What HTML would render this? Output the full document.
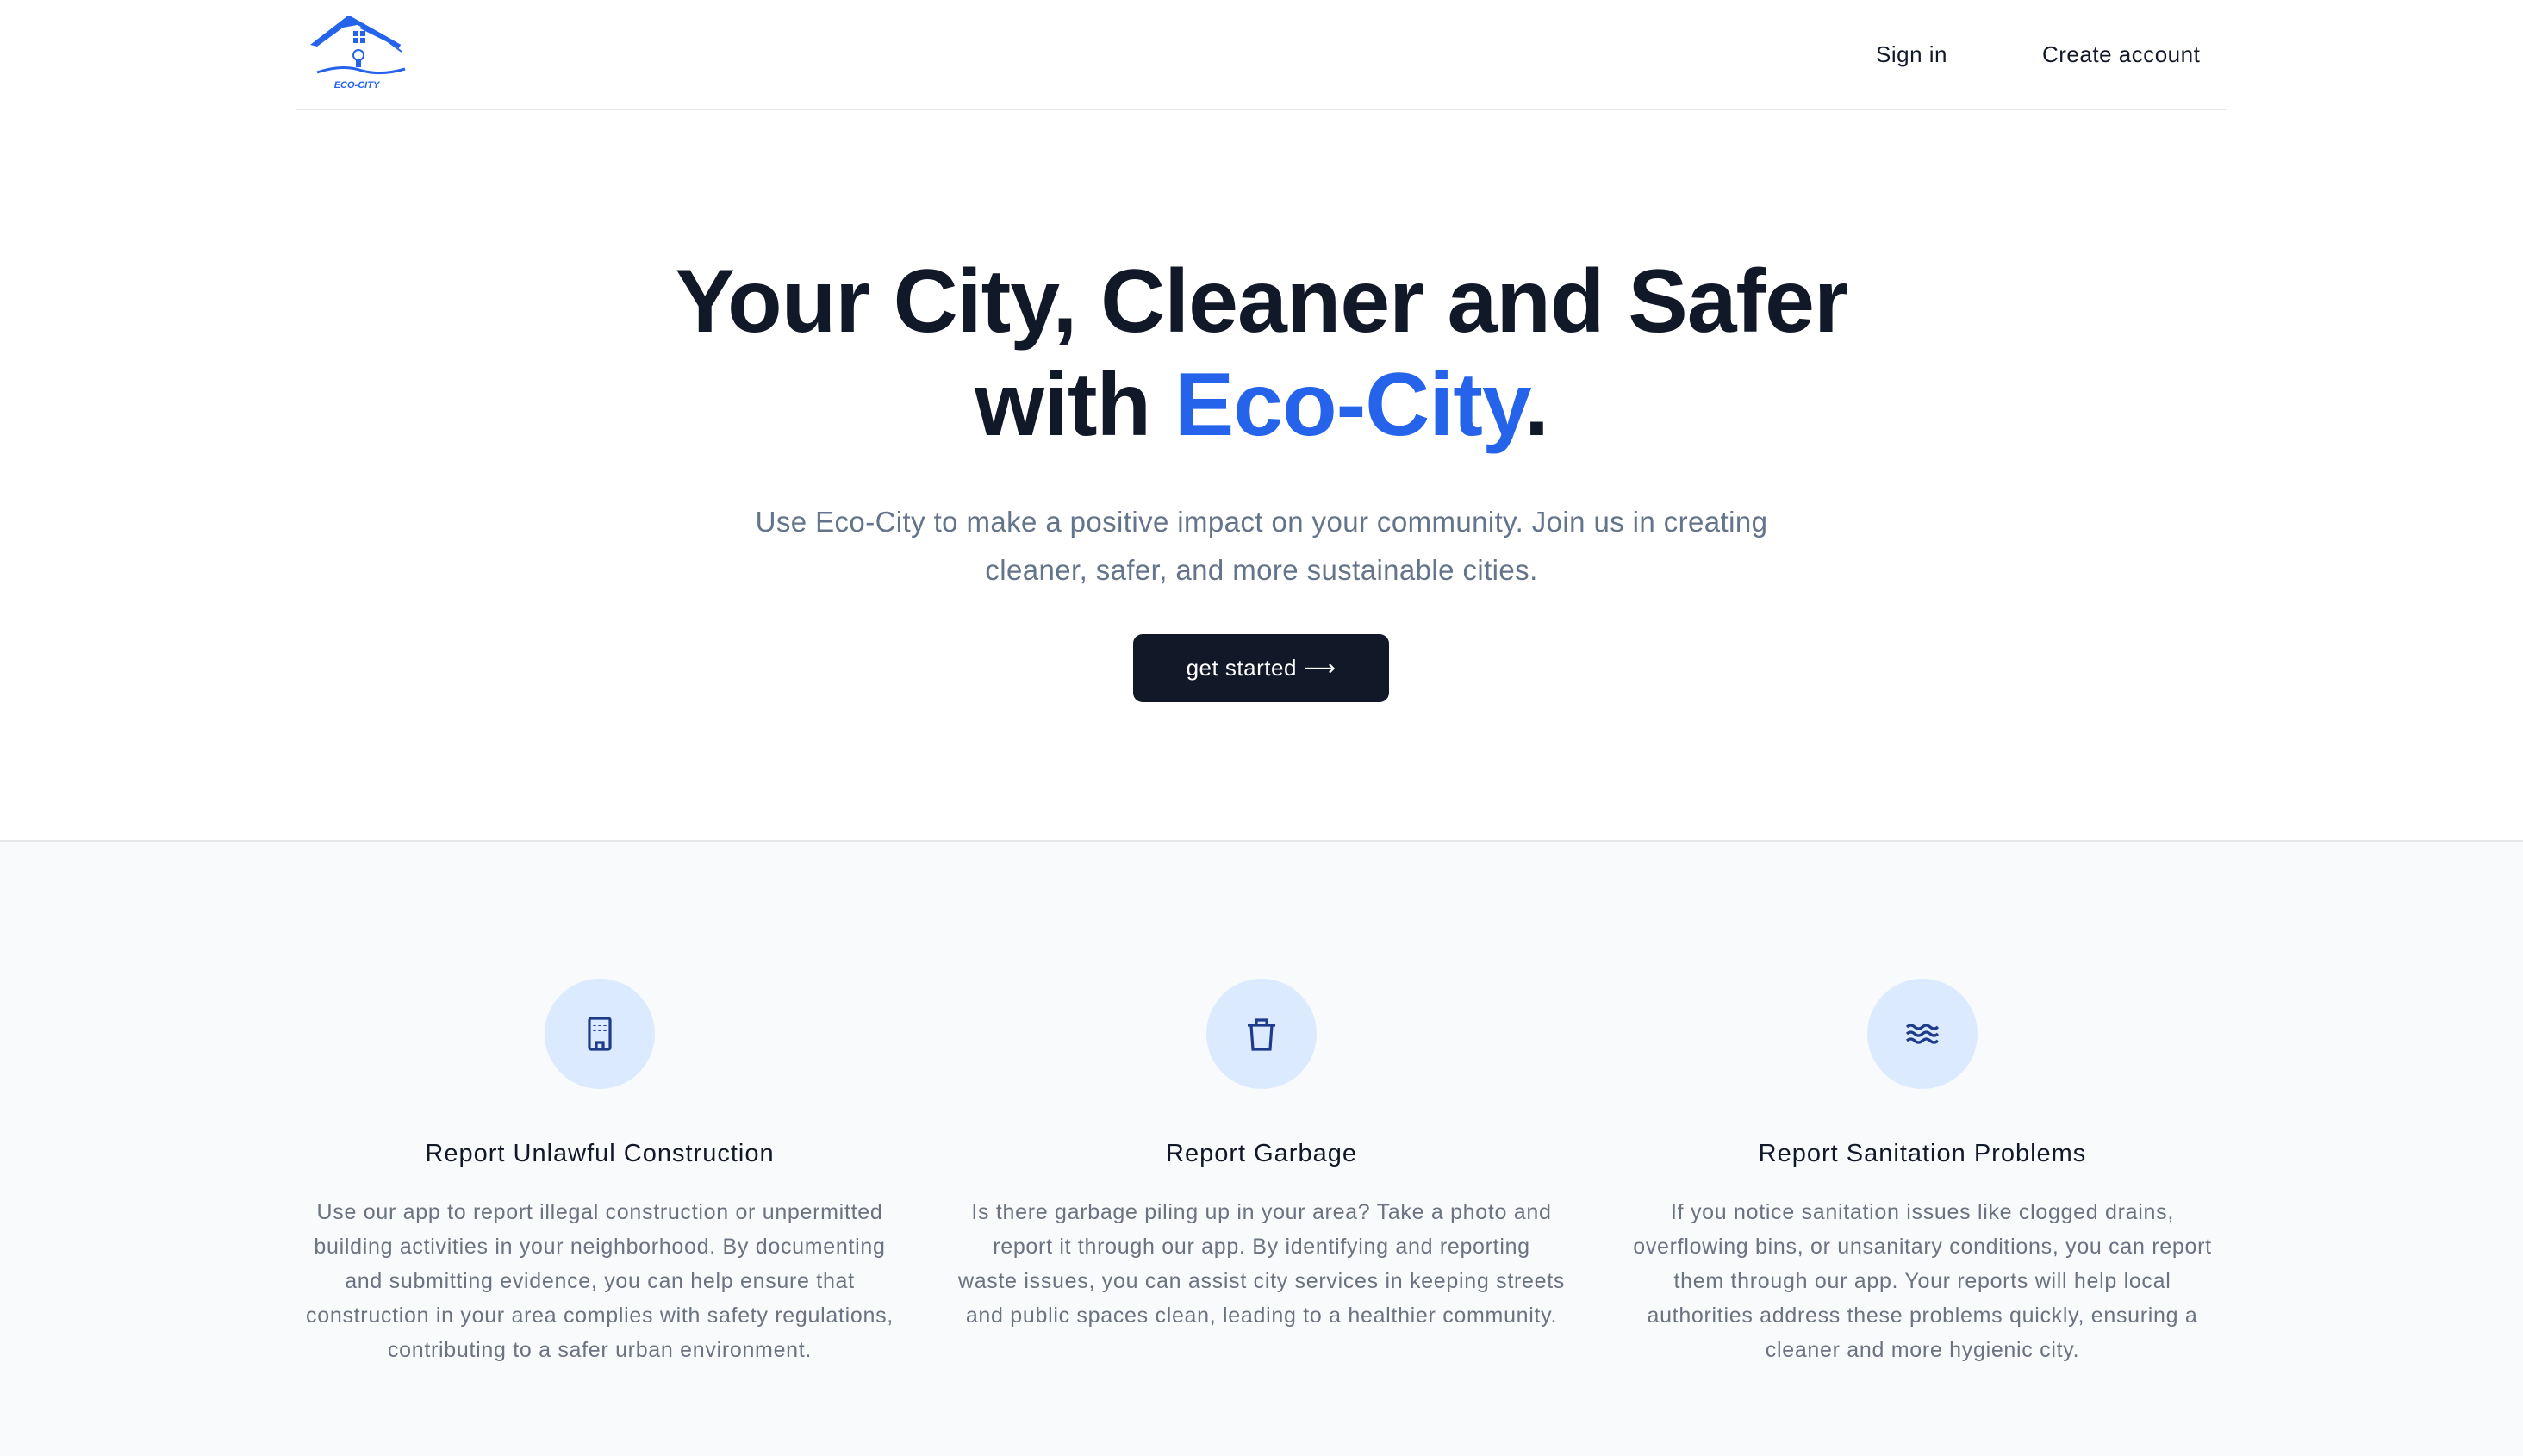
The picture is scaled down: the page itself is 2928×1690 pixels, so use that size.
<!DOCTYPE html>
<html><head><meta charset="utf-8">
<style>
*{margin:0;padding:0;box-sizing:border-box}
body{width:2928px;height:1690px;overflow:hidden;background:#fff;font-family:"Liberation Sans","DejaVu Sans",sans-serif;position:relative}
.abs{position:absolute}
.nav a{position:absolute;font-size:26px;color:#111827;top:48px;letter-spacing:0.5px}
h1{position:absolute;left:0;width:2928px;text-align:center;font-size:104px;line-height:120px;font-weight:700;color:#111827;letter-spacing:-1px;top:290px}
h1 span{color:#2563eb}
.lead{position:absolute;left:840px;width:1248px;text-align:center;top:578px;font-size:33px;line-height:56px;color:#64748b;letter-spacing:0.4px}
.btn{position:absolute;left:1315px;top:736px;width:297px;height:79px;background:#111827;border-radius:11px;color:#fff;font-size:26px;text-align:center;line-height:79px;letter-spacing:0.5px}
.sec{position:absolute;left:0;top:975px;width:2928px;height:715px;background:#f8fafc;border-top:2px solid #e5e7eb}
.col{position:absolute;width:760px;text-align:center;white-space:nowrap}
.circ{position:absolute;width:128px;height:128px;border-radius:50%;background:#dbeafe;top:1136px}
.circ svg{position:absolute;left:40px;top:40px}
.col h3{font-size:29px;font-weight:400;color:#111827;line-height:40px;letter-spacing:1px}
.col p{font-size:25px;color:#6b7280;line-height:40px;margin-top:28px;letter-spacing:0.7px}
</style></head><body>
<svg class="abs" style="left:358px;top:14px" width="115" height="95" viewBox="0 0 115 95">
<polygon points="2,38 46,4 62,14 40,18 10,40" fill="#2563eb"/>
<polyline points="46,6 78,24 106,40" fill="none" stroke="#2563eb" stroke-width="5"/>
<polyline points="60,18 92,34 108,46" fill="none" stroke="#2563eb" stroke-width="2"/>
<rect x="52" y="22" width="6" height="6" fill="#2563eb"/><rect x="60" y="22" width="6" height="6" fill="#2563eb"/>
<rect x="52" y="30" width="6" height="6" fill="#2563eb"/><rect x="60" y="30" width="6" height="6" fill="#2563eb"/>
<circle cx="58" cy="50" r="6" fill="none" stroke="#2563eb" stroke-width="2"/>
<rect x="55" y="56" width="6" height="8" fill="#2563eb"/>
<path d="M10,70 Q40,60 62,68 Q85,74 112,66" fill="none" stroke="#2563eb" stroke-width="3"/>
<text x="56" y="88" font-size="11" font-style="italic" font-weight="700" fill="#2563eb" text-anchor="middle" font-family="Liberation Sans">ECO-CITY</text>
</svg>
<div class="nav"><a style="left:2177px">Sign in</a><a style="left:2370px">Create account</a></div>
<div class="abs" style="left:344px;top:126px;width:2240px;height:2px;background:#e5e7eb"></div>
<h1>Your City, Cleaner and Safer<br>with <span>Eco-City</span>.</h1>
<div class="lead">Use Eco-City to make a positive impact on your community. Join us in creating cleaner, safer, and more sustainable cities.</div>
<div class="btn">get started &#x27F6;</div>
<div class="sec"></div>
<div class="circ" style="left:632px"><svg width="48" height="48" viewBox="0 0 24 24" fill="none" stroke="#1e3a8a" stroke-width="1.6"><rect x="6" y="3" width="12" height="18" rx="1"/><path d="M9 7v.5M12 7v.5M15 7v.5M9 10v.5M12 10v.5M15 10v.5M9 13v.5M12 13v.5M15 13v.5M10 21v-4h4v4"/></svg></div>
<div class="circ" style="left:1400px"><svg width="48" height="48" viewBox="0 0 24 24" fill="none" stroke="#1e3a8a" stroke-width="1.6"><path d="M4 7h16M9 7V4h6v3M6 7l1 14h10l1-14"/></svg></div>
<div class="circ" style="left:2167px"><svg width="48" height="48" viewBox="0 0 24 24" fill="none" stroke="#1e3a8a" stroke-width="1.6"><path d="M3 8q2.25-2 4.5 0t4.5 0 4.5 0 4.5 0M3 12q2.25-2 4.5 0t4.5 0 4.5 0 4.5 0M3 16q2.25-2 4.5 0t4.5 0 4.5 0 4.5 0"/></svg></div>
<div class="col" style="left:316px;top:1319px"><h3>Report Unlawful Construction</h3><p>Use our app to report illegal construction or unpermitted<br>building activities in your neighborhood. By documenting<br>and submitting evidence, you can help ensure that<br>construction in your area complies with safety regulations,<br>contributing to a safer urban environment.</p></div>
<div class="col" style="left:1084px;top:1319px"><h3>Report Garbage</h3><p>Is there garbage piling up in your area? Take a photo and<br>report it through our app. By identifying and reporting<br>waste issues, you can assist city services in keeping streets<br>and public spaces clean, leading to a healthier community.</p></div>
<div class="col" style="left:1851px;top:1319px"><h3>Report Sanitation Problems</h3><p>If you notice sanitation issues like clogged drains,<br>overflowing bins, or unsanitary conditions, you can report<br>them through our app. Your reports will help local<br>authorities address these problems quickly, ensuring a<br>cleaner and more hygienic city.</p></div>
</body></html>
